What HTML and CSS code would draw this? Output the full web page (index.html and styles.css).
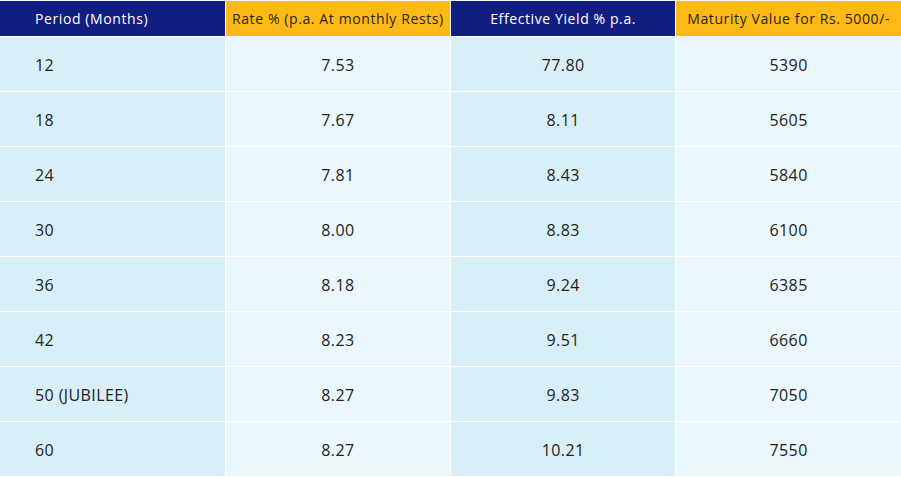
FILE: index.html
```html
<!DOCTYPE html>
<html>
<head>
<meta charset="utf-8">
<link rel="stylesheet" href="styles.css">
</head>
<body>
<table class="rates">
  <thead>
    <tr>
      <th class="navy first">Period (Months)</th>
      <th class="amber">Rate % (p.a. At monthly Rests)</th>
      <th class="navy">Effective Yield % p.a.</th>
      <th class="amber">Maturity Value for Rs. 5000/-</th>
    </tr>
  </thead>
  <tbody>
    <tr><td class="first">12</td><td>7.53</td><td>77.80</td><td>5390</td></tr>
    <tr><td class="first">18</td><td>7.67</td><td>8.11</td><td>5605</td></tr>
    <tr><td class="first">24</td><td>7.81</td><td>8.43</td><td>5840</td></tr>
    <tr><td class="first">30</td><td>8.00</td><td>8.83</td><td>6100</td></tr>
    <tr><td class="first">36</td><td>8.18</td><td>9.24</td><td>6385</td></tr>
    <tr><td class="first">42</td><td>8.23</td><td>9.51</td><td>6660</td></tr>
    <tr><td class="first">50 (JUBILEE)</td><td>8.27</td><td>9.83</td><td>7050</td></tr>
    <tr><td class="first">60</td><td>8.27</td><td>10.21</td><td>7550</td></tr>
  </tbody>
</table>
</body>
</html>
```
FILE: styles.css
```css
html, body {
  margin: 0;
  padding: 0;
  background: #ffffff;
}
body {
  font-family: "Open Sans", "Liberation Sans", sans-serif;
  color: #222222;
}
.rates {
  width: 901px;
  border-collapse: collapse;
  table-layout: fixed;
  border-top: 1px solid #ffffff;
}
.rates th,
.rates td {
  border-left: 1px solid #ffffff;
  padding: 0;
  text-align: center;
  vertical-align: middle;
}
.rates th:first-child,
.rates td:first-child {
  border-left: none;
}
.rates th {
  height: 35px;
  font-size: 14px;
  font-weight: 500;
  letter-spacing: 0.6px;
  border-bottom: 1px solid #ffffff;
}
.rates td {
  height: 52px;
  padding-top: 2px;
  font-size: 16px;
  letter-spacing: 0.4px;
  border-bottom: 1px solid #ffffff;
}
.rates td:nth-child(odd) {
  background: #d9eff7;
}
.rates td:nth-child(even) {
  background: #eaf7fd;
}
.rates .first {
  text-align: left;
  padding-left: 35px;
}
.navy {
  background: #121e7f;
  color: #ffffff;
}
.amber {
  background: #fdb916;
  color: #262626;
}
```
